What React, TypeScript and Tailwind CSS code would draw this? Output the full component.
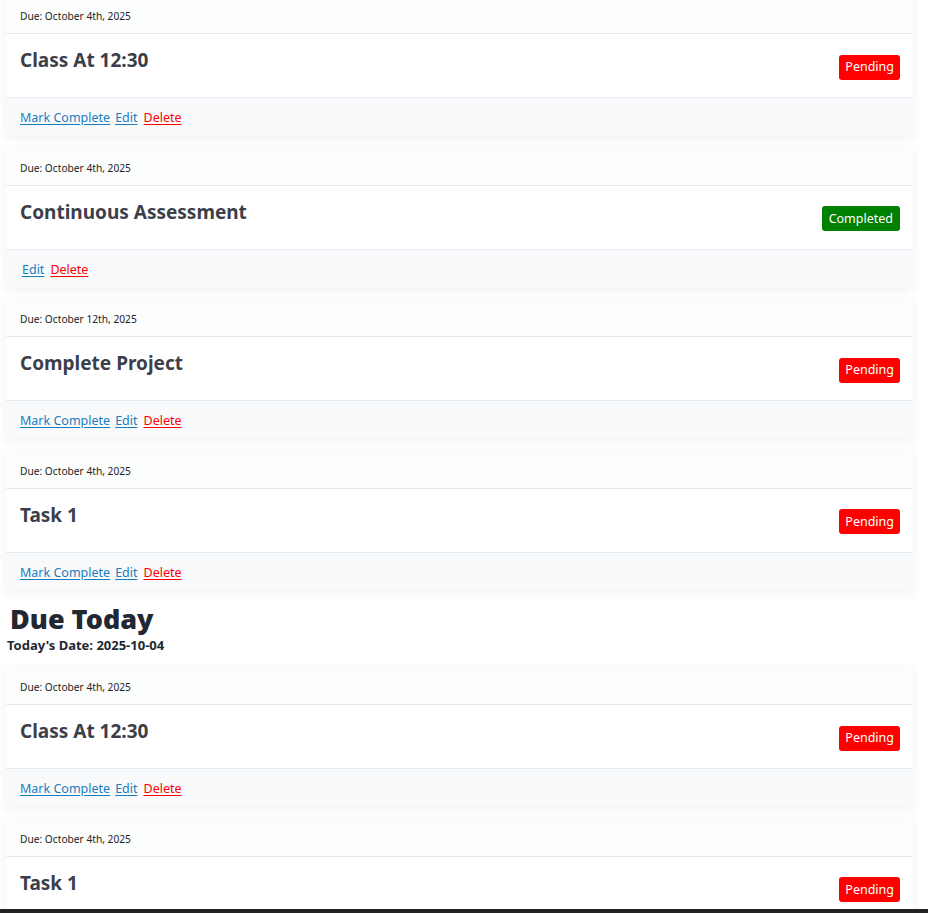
import React from "react";

type Task = {
  due: string;
  title: string;
  done: boolean;
};

const upcoming: Task[] = [
  { due: "October 4th, 2025", title: "Class At 12:30", done: false },
  { due: "October 4th, 2025", title: "Continuous Assessment", done: true },
  { due: "October 12th, 2025", title: "Complete Project", done: false },
  { due: "October 4th, 2025", title: "Task 1", done: false },
];

const today: Task[] = [
  { due: "October 4th, 2025", title: "Class At 12:30", done: false },
  { due: "October 4th, 2025", title: "Task 1", done: false },
];

function TaskCard({ task }: { task: Task }) {
  return (
    <div className="ml-[6px] mr-[15px] mb-[12.5px] rounded-[4px] bg-white shadow-[0_2px_10px_rgba(30,40,80,0.07)]">
      <div className="h-[37px] flex items-center pt-[3px] px-[14px] bg-[#fcfdfd] border-b border-[#e6e9ef] rounded-t-[4px]">
        <span className="text-[10.2px] text-[#222] leading-none">Due: {task.due}</span>
      </div>
      <div className="h-[64px] flex justify-between px-[14px] pr-[13px] border-b border-[#e6e9ef]">
        <h3 className="pt-[13px] text-[19px] font-bold text-[#3b3f4a] leading-[26px]">{task.title}</h3>
        <div className="pt-[19px]">
          {task.done ? (
            <span className="inline-flex items-center h-[25px] px-[7px] rounded-[3px] bg-[#008000] text-white text-[12.5px]">
              Completed
            </span>
          ) : (
            <span className="inline-flex items-center h-[25px] px-[6px] rounded-[3px] bg-[#ff0000] text-white text-[12.5px]">
              Pending
            </span>
          )}
        </div>
      </div>
      <div className="h-[38px] flex items-center gap-[5px] pt-[3px] px-[14px] bg-[#f9fafb] rounded-b-[4px] text-[12.5px]">
        {!task.done && (
          <a href="#" className="text-[#1a7dbd] underline underline-offset-2">
            Mark Complete
          </a>
        )}
        <a href="#" className={`text-[#1a7dbd] underline underline-offset-2 ${task.done ? "ml-[2px]" : ""}`}>
          Edit
        </a>
        <a href="#" className="ml-[1px] text-[#ff0000] underline underline-offset-2">
          Delete
        </a>
      </div>
    </div>
  );
}

export default function App() {
  return (
    <div
      className="relative h-[913px] overflow-hidden bg-white"
      style={{ fontFamily: '"Noto Sans", "Open Sans", sans-serif' }}
    >
      <div className="-mt-[3px]">
        {upcoming.map((t, i) => (
          <TaskCard key={i} task={t} />
        ))}
        <div className="pb-[13px]">
          <h2 className="pl-[10px] text-[27px] font-black text-[#222831] leading-[32px]">Due Today</h2>
          <p className="pl-[7px] text-[13px] font-bold text-[#222831] leading-[20px]">Today's Date: 2025-10-04</p>
        </div>
        {today.map((t, i) => (
          <TaskCard key={i} task={t} />
        ))}
      </div>
      <div className="absolute left-0 right-0 bottom-0 h-[4px] bg-[#222]" />
    </div>
  );
}
